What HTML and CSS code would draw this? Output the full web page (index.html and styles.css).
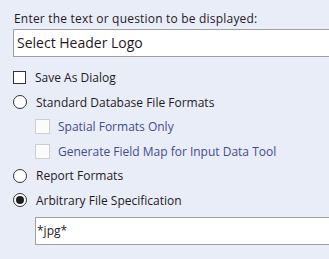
FILE: index.html
```html
<!DOCTYPE html>
<html lang="en">
<head>
    <meta charset="UTF-8">
    <title>Header Logo Question</title>
    <link rel="stylesheet" href="styles.css">
</head>
<body>
    <div class="panel">
        <div class="prompt">Enter the text or question to be displayed:</div>
        <div class="field">Select Header Logo</div>

        <div class="option">
            <span class="check"></span>
            <span>Save As Dialog</span>
        </div>
        <div class="option">
            <span class="radio"></span>
            <span>Standard Database File Formats</span>
        </div>
        <div class="option sub">
            <span class="check off"></span>
            <span>Spatial Formats Only</span>
        </div>
        <div class="option sub">
            <span class="check off"></span>
            <span>Generate Field Map for Input Data Tool</span>
        </div>
        <div class="option">
            <span class="radio"></span>
            <span>Report Formats</span>
        </div>
        <div class="option">
            <span class="radio on"></span>
            <span>Arbitrary File Specification</span>
        </div>
        <div class="field small">*jpg*</div>
    </div>
</body>
</html>
```

FILE: styles.css
```css
body {
    margin: 0;
    background: #e9edf8;
    font-family: "Open Sans", Arial, sans-serif;
    font-size: 12px;
    color: #1f1a24;
    overflow: hidden;
}
.panel {
    display: flex;
    flex-direction: column;
    padding: 10px 0 0 13px;
}
.prompt {
    padding-left: 1px;
    height: 19px;
    letter-spacing: 0.2px;
}
.field {
    width: 340px;
    height: 28px;
    flex-shrink: 0;
    box-sizing: border-box;
    background: #fff;
    border: 1px solid #a0a0a0;
    padding: 3px 3px;
    font-size: 14px;
    line-height: 20px;
    margin-bottom: 8.5px;
}
.field.small {
    margin: 4.5px 0 0 22px;
    padding-left: 1px;
    font-size: 12px;
}
.option {
    display: flex;
    align-items: center;
    gap: 9px;
    height: 24.5px;
    flex-shrink: 0;
}
.option.sub {
    padding-left: 22px;
    color: #434c8e;
    gap: 8px;
}
.check {
    width: 13px;
    height: 13px;
    box-sizing: border-box;
    border: 1px solid #333;
    background: #fff;
}
.check.off {
    width: 15px;
    height: 15px;
    border-color: #cfcfcf;
    background: #fbfbfb;
}
.radio {
    width: 14px;
    height: 14px;
    box-sizing: border-box;
    border: 1px solid #333;
    border-radius: 50%;
    background: #fff;
    display: flex;
    align-items: center;
    justify-content: center;
}
.radio.on::after {
    content: "";
    width: 8px;
    height: 8px;
    border-radius: 50%;
    background: #1f1f1f;
}
```
